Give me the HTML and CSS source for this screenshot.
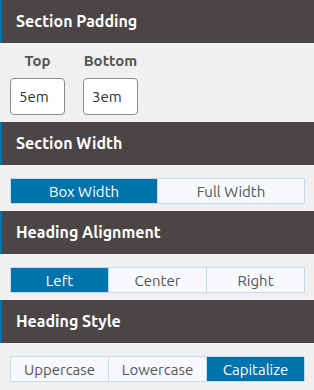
FILE: index.html
```html
<!DOCTYPE html>
<html lang="en">
<head>
<meta charset="UTF-8">
<meta name="viewport" content="width=device-width, initial-scale=1.0">
<title>Section Settings</title>
<link rel="stylesheet" href="styles.css">
</head>
<body>

<div class="panel">
    <h2 class="panel-title">Section Padding</h2>
    <div class="panel-body padding-body">
        <div class="field">
            <label for="pad-top">Top</label>
            <input type="text" id="pad-top" value="5em">
        </div>
        <div class="field">
            <label for="pad-bottom">Bottom</label>
            <input type="text" id="pad-bottom" value="3em">
        </div>
    </div>
</div>

<div class="panel">
    <h2 class="panel-title">Section Width</h2>
    <div class="panel-body">
        <div class="switch">
            <button class="switch-btn active">Box Width</button>
            <button class="switch-btn">Full Width</button>
        </div>
    </div>
</div>

<div class="panel">
    <h2 class="panel-title">Heading Alignment</h2>
    <div class="panel-body">
        <div class="switch">
            <button class="switch-btn active">Left</button>
            <button class="switch-btn">Center</button>
            <button class="switch-btn">Right</button>
        </div>
    </div>
</div>

<div class="panel">
    <h2 class="panel-title">Heading Style</h2>
    <div class="panel-body">
        <div class="switch">
            <button class="switch-btn">Uppercase</button>
            <button class="switch-btn">Lowercase</button>
            <button class="switch-btn active">Capitalize</button>
        </div>
    </div>
</div>

</body>
</html>
```

FILE: styles.css
```css
body {
    font-family: "Ubuntu", "Open Sans", sans-serif;
    background-color: #f0f0f0;
    margin: 0;
    padding: 0;
}

.panel-title {
    margin: 0;
    height: 43px;
    line-height: 42px;
    padding-left: 14px;
    border-left: 2px solid #0073aa;
    background-color: #4b4645;
    color: #fff;
    font-size: 16px;
    font-weight: 600;
}

.panel-body {
    padding: 13px 9px 7px 10px;
}

.padding-body {
    display: flex;
    gap: 18px;
    padding-top: 9px;
}

.field {
    display: flex;
    flex-direction: column;
    align-items: center;
    width: 55px;
}

.field label {
    font-size: 15px;
    line-height: 18px;
    font-weight: 600;
    color: #555;
    margin-bottom: 8px;
}

.field input {
    box-sizing: border-box;
    width: 55px;
    height: 37px;
    padding: 0 8px;
    border: 1px solid #8c8c8c;
    border-radius: 4px;
    background: #fff;
    font-family: inherit;
    font-size: 15px;
    color: #333;
}

.switch {
    display: flex;
    border: 1px solid #c6daee;
}

.switch-btn {
    flex: 1;
    height: 24px;
    padding: 0;
    border: none;
    border-left: 1px solid #c6daee;
    background-color: #f7f9fc;
    color: #555;
    font-family: inherit;
    font-size: 15px;
    cursor: pointer;
}

.switch-btn:first-child {
    border-left: none;
}

.switch-btn.active {
    background-color: #0073aa;
    color: #fff;
}
```
